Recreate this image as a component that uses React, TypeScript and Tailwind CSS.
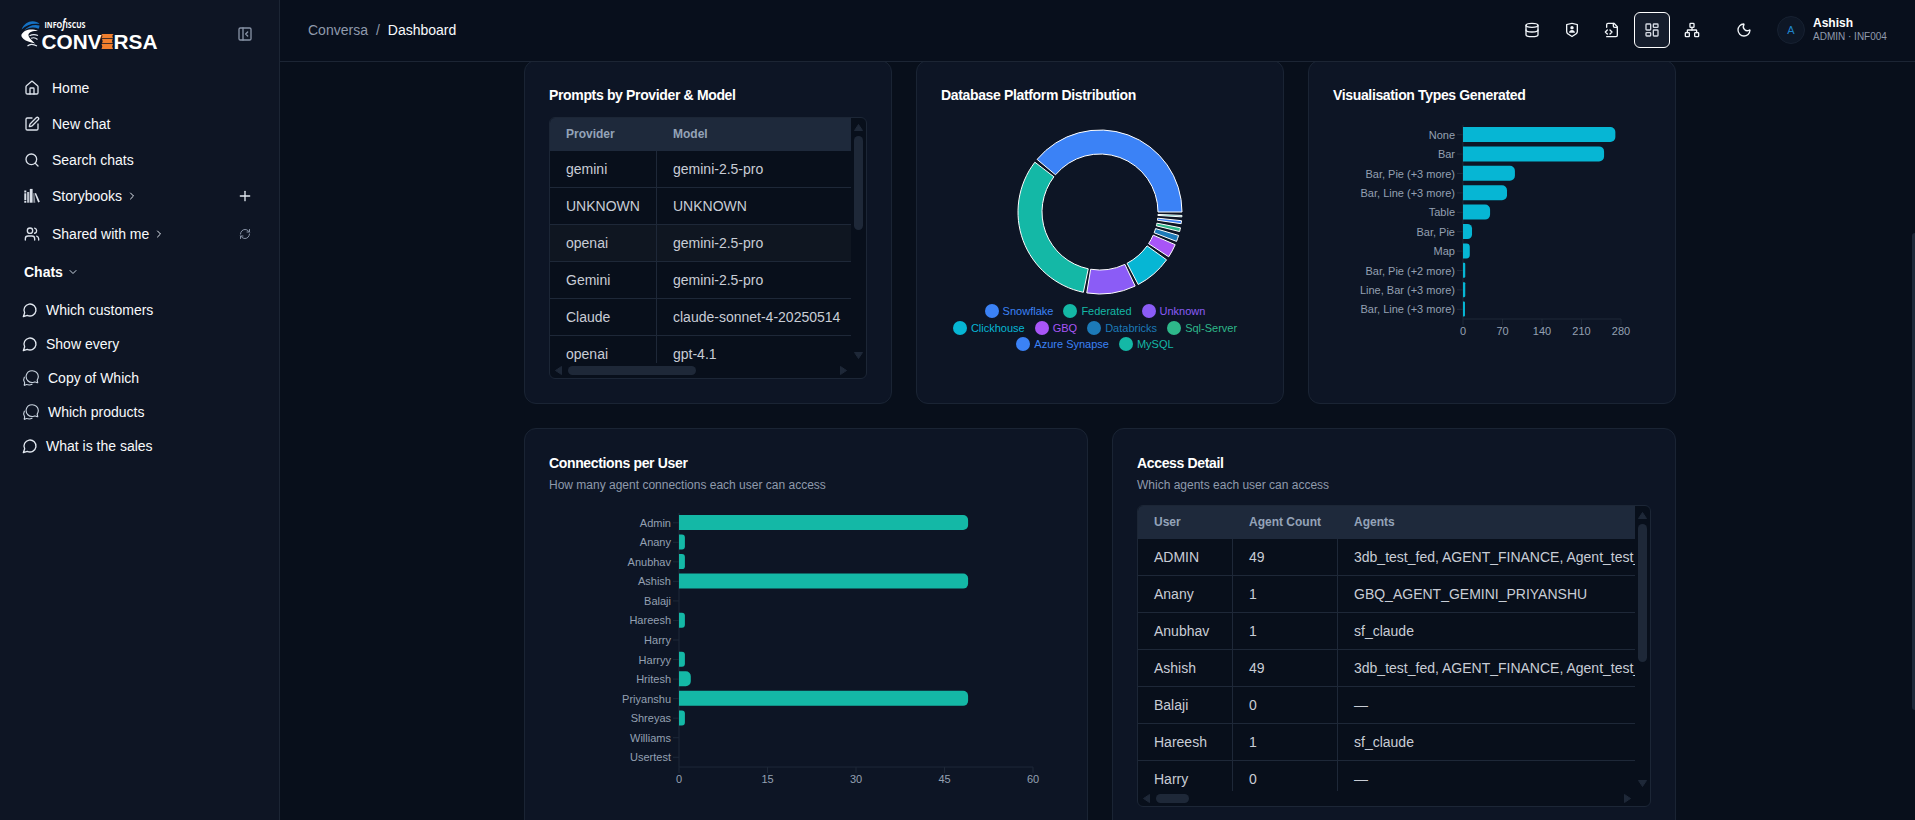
import type { ReactNode } from 'react';
import {
  ChevronDown,
  ChevronRight,
  Database,
  House,
  LayoutDashboard,
  Moon,
  Network,
  PanelLeftClose,
  Plus,
  RefreshCw,
  Search,
  SquarePen,
  Users,
} from 'lucide-react';
import { IoChatbubblesOutline } from 'react-icons/io5';
import { RiShieldUserLine } from 'react-icons/ri';

const chats = [
  { title: 'Which customers', shared: false },
  { title: 'Show every', shared: false },
  { title: 'Copy of Which', shared: true },
  { title: 'Which products', shared: true },
  { title: 'What is the sales', shared: false },
];

const providerRows = [
  ['gemini', 'gemini-2.5-pro'],
  ['UNKNOWN', 'UNKNOWN'],
  ['openai', 'gemini-2.5-pro'],
  ['Gemini', 'gemini-2.5-pro'],
  ['Claude', 'claude-sonnet-4-20250514'],
  ['openai', 'gpt-4.1'],
];

const accessRows = [
  ['ADMIN', '49', '3db_test_fed, AGENT_FINANCE, Agent_test_1'],
  ['Anany', '1', 'GBQ_AGENT_GEMINI_PRIYANSHU'],
  ['Anubhav', '1', 'sf_claude'],
  ['Ashish', '49', '3db_test_fed, AGENT_FINANCE, Agent_test_1'],
  ['Balaji', '0', '—'],
  ['Hareesh', '1', 'sf_claude'],
  ['Harry', '0', '—'],
];

// start and end are degrees, counter-clockwise from three o'clock
const platforms = [
  { name: 'Snowflake', color: '#3b82f6', start: 0, end: 140.1 },
  { name: 'Federated', color: '#14b8a6', start: 142.6, end: 258.3 },
  { name: 'Unknown', color: '#8b5cf6', start: 260.7, end: 295.4 },
  { name: 'Clickhouse', color: '#06b6d4', start: 297.8, end: 324.3 },
  { name: 'GBQ', color: '#a855f7', start: 326.9, end: 336.5 },
  { name: 'Databricks', color: '#1c7ab8', start: 339, end: 343.4 },
  { name: 'Sql-Server', color: '#2eb88a', start: 346.2, end: 348.9 },
  { name: 'Azure Synapse', color: '#3b82f6', start: 351.8, end: 353.9 },
  { name: 'MySQL', color: '#14b8a6', start: 356.6, end: 357.6 },
];

const legendRows = [platforms.slice(0, 3), platforms.slice(3, 7), platforms.slice(7)];

const visualisations = [
  { label: 'None', value: 270 },
  { label: 'Bar', value: 250 },
  { label: 'Bar, Pie (+3 more)', value: 92 },
  { label: 'Bar, Line (+3 more)', value: 78 },
  { label: 'Table', value: 48 },
  { label: 'Bar, Pie', value: 16 },
  { label: 'Map', value: 12 },
  { label: 'Bar, Pie (+2 more)', value: 4 },
  { label: 'Line, Bar (+3 more)', value: 4 },
  { label: 'Bar, Line (+3 more)', value: 3.5 },
];

const connections = [
  { label: 'Admin', value: 49 },
  { label: 'Anany', value: 1 },
  { label: 'Anubhav', value: 1 },
  { label: 'Ashish', value: 49 },
  { label: 'Balaji', value: 0 },
  { label: 'Hareesh', value: 1 },
  { label: 'Harry', value: 0 },
  { label: 'Harryy', value: 1 },
  { label: 'Hritesh', value: 2 },
  { label: 'Priyanshu', value: 49 },
  { label: 'Shreyas', value: 1 },
  { label: 'Williams', value: 0 },
  { label: 'Usertest', value: 0 },
];

function Logo() {
  return (
    <svg width="140" height="40" viewBox="0 -5 140 40" className="block">
      <path d="M1.500 10.500 C4 5 8 2.300 12.500 2.300 C15.500 2.300 18 3.200 19.500 5 C13 3.800 6.500 5.500 1.500 10.500Z" fill="#1672c4" />
      <path d="M4 11.500 C8 6.800 14 5 19.500 6.500 C19.500 8 19 9 18.500 9.800 C13.500 7.500 8.500 8.500 4 11.500Z" fill="#1672c4" />
      <path
        d="M1.500 15.500 C4 11 11 8.800 18 12 C12 11.500 8 13.500 8.500 16.500 C9 19.500 12.500 21.500 15 24.500 C10 22.800 6 22.500 3.500 20 C1.800 18.300 1 17 1.500 15.500Z"
        fill="#fff"
      />
      <path
        d="M9.500 16.800 C12 15.400 15 15.300 18 16.500 M11 19.300 C13.500 18.300 16 18.900 17.500 20.500 M7.500 27 C10 24.800 13.500 25 17 27"
        fill="none"
        stroke="#e2e8f0"
        strokeWidth="1.100"
      />
      <g fill="#fff" fontWeight="700">
        <text x="24.500" y="8.800" textLength="41" lengthAdjust="spacingAndGlyphs" fontFamily="'Open Sans', sans-serif" fontSize="9.500">
          INFO
          <tspan fontStyle="italic" fontSize="11.500">f</tspan>
          ISCUS
        </text>
        <g fontFamily="'Liberation Sans', Arial, sans-serif" fontSize="21">
          <text x="21.500" y="30" textLength="60" lengthAdjust="spacingAndGlyphs">CONV</text>
          <text x="93.500" y="30" textLength="44" lengthAdjust="spacingAndGlyphs">RSA</text>
        </g>
      </g>
      <path
        d="M81.500 15 H93.500 L92.300 16.800 L93 19.200 H81.500 L82.500 17Z M82 20 H92.700 L92 22 L92.700 24.300 H82 L82.700 22.200Z M81.500 25 H93 L92.200 27.500 L93 30 H81.500 L82.300 27.500Z"
        fill="#f07f2e"
      />
    </svg>
  );
}

function BooksIcon() {
  return (
    <svg width="16" height="16" viewBox="0 0 16 16" fill="currentColor">
      <path d="M0.300 2.500 H2.300 V4.500 H0.300Z M0.300 5.200 H2.300 V12 H0.300Z M0.300 12.700 H2.300 V14.700 H0.300Z" />
      <path d="M3.100 4 H5.300 V14.700 H3.100Z" opacity="0.850" />
      <path d="M5.800 0.900 H8.600 V14.700 H5.800Z" />
      <path d="M9.300 5.300 L10.300 4.900 L11.300 14.700 H9.300Z" opacity="0.600" />
      <path d="M10.600 5.600 L12 5 L15.800 13.800 L14.200 14.600Z" />
    </svg>
  );
}

function ChatIcon() {
  return (
    <svg width="16" height="16" viewBox="0 0 24 24" fill="none" stroke="#e2e8f0" strokeWidth="2" strokeLinecap="round" strokeLinejoin="round">
      <path d="M7.900 20A9 9 0 1 0 4 16.100L2 22Z" />
    </svg>
  );
}

function FileCodeIcon() {
  return (
    <svg width="16" height="16" viewBox="0 0 24 24" fill="none" stroke="currentColor" strokeWidth="2" strokeLinecap="round" strokeLinejoin="round">
      <path d="M4 22h14a2 2 0 0 0 2-2V7l-5-5H6a2 2 0 0 0-2 2v4" />
      <path d="M14 2v4a2 2 0 0 0 2 2h4" />
      <path d="m5 12-3 3 3 3" />
      <path d="m9 18 3-3-3-3" />
    </svg>
  );
}

function NavItem({ icon, label, chevron, action }: { icon: ReactNode; label: string; chevron?: boolean; action?: ReactNode }) {
  return (
    <div className="flex h-9 items-center pl-6 pr-[26px] text-sm text-[#f8fafc]">
      <span className="flex w-4 justify-center text-[#dbe1ea]">{icon}</span>
      <span className="ml-3">{label}</span>
      {chevron && <ChevronRight className="ml-1 h-3 w-3 text-[#e2e8f0]" />}
      {action && <span className="ml-auto flex w-4 justify-center">{action}</span>}
    </div>
  );
}

function Sidebar() {
  return (
    <aside className="flex h-full w-[280px] shrink-0 flex-col border-r border-[#1c2534] bg-[#0e1524]">
      <div className="flex h-[70px] shrink-0 items-start justify-between pl-5 pr-[26px] pt-[14px]">
        <Logo />
        <PanelLeftClose className="mt-3 h-4 w-4 text-[#8792a5]" />
      </div>
      <nav className="flex flex-col">
        <NavItem icon={<House className="h-4 w-4" />} label="Home" />
        <NavItem icon={<SquarePen className="h-4 w-4" />} label="New chat" />
        <NavItem icon={<Search className="h-4 w-4" />} label="Search chats" />
        <NavItem icon={<BooksIcon />} label="Storybooks" chevron action={<Plus className="h-4 w-4 text-[#e2e8f0]" />} />
        <div className="h-0.5" />
        <NavItem
          icon={<Users className="h-4 w-4" />}
          label="Shared with me"
          chevron
          action={<RefreshCw className="h-3 w-3 text-[#8792a5]" />}
        />
      </nav>
      <div className="mt-1.5 flex h-7 items-center gap-1 pl-6 text-sm font-bold text-white">
        Chats
        <ChevronDown className="h-3 w-3 text-[#cbd5e1]" />
      </div>
      <div className="mt-[7px] flex flex-col">
        {chats.map((chat) => (
          <div key={chat.title} className="flex h-[34px] items-center gap-2 pl-[22px] text-sm text-[#f8fafc]">
            {chat.shared ? <IoChatbubblesOutline className="h-[18px] w-[18px] text-[#cbd5e1]" /> : <ChatIcon />}
            {chat.title}
          </div>
        ))}
      </div>
    </aside>
  );
}

function IconButton({ children, active }: { children: ReactNode; active?: boolean }) {
  return (
    <div
      className={
        active
          ? 'flex h-9 w-9 items-center justify-center rounded-md border border-white bg-[#151d2c] text-[#d5dae3]'
          : 'flex h-9 w-9 items-center justify-center text-[#f1f5f9]'
      }
    >
      {children}
    </div>
  );
}

function Header() {
  return (
    <header className="relative z-10 flex h-[62px] shrink-0 items-center border-b border-[#1c2534] bg-[#080f1c] pl-7 pb-px">
      <div className="flex items-center gap-2 text-sm text-[#8f9aac]">
        <span>Conversa</span>
        <span>/</span>
        <span className="text-[#f8fafc]">Dashboard</span>
      </div>
      <div className="ml-auto flex items-center">
        <div className="flex gap-1">
          <IconButton>
            <Database className="h-4 w-4" />
          </IconButton>
          <IconButton>
            <RiShieldUserLine className="h-4 w-4" />
          </IconButton>
          <IconButton>
            <FileCodeIcon />
          </IconButton>
          <IconButton active>
            <LayoutDashboard className="h-4 w-4" />
          </IconButton>
          <IconButton>
            <Network className="h-4 w-4" />
          </IconButton>
        </div>
        <div className="ml-4">
          <IconButton>
            <Moon className="h-4 w-4" />
          </IconButton>
        </div>
        <div className="ml-[15px] flex h-7 w-7 items-center justify-center rounded-full border border-[#172131] bg-[#0e1726] text-[11px] text-[#1f83c9]">
          A
        </div>
        <div className="ml-2 w-[102px] pb-0.5">
          <div className="text-xs font-bold leading-[14px] text-white">Ashish</div>
          <div className="text-[10px] leading-[13px] text-[#8f9aac]">ADMIN · INF004</div>
        </div>
      </div>
    </header>
  );
}

function Card({ title, subtitle, className, children }: { title: string; subtitle?: string; className: string; children: ReactNode }) {
  return (
    <section className={`flex flex-col rounded-xl border border-[#1a2434] bg-[#0d1525] p-6 ${className}`}>
      <h3 className="text-sm font-bold tracking-tight text-white">{title}</h3>
      {subtitle && <p className="mt-1 text-xs text-[#8f9aac]">{subtitle}</p>}
      <div className="mt-3">{children}</div>
    </section>
  );
}

function Arrow({ rotate }: { rotate: number }) {
  return (
    <svg width="9" height="7" viewBox="0 0 9 7" style={{ transform: `rotate(${rotate}deg)` }}>
      <path d="M4.500 0.500 L8.500 6.500 H0.500 Z" fill="#1e2838" stroke="#1e2838" strokeLinejoin="round" />
    </svg>
  );
}

interface ScrollTableProps {
  columns: { title: string; className: string }[];
  rows: string[][];
  height: number;
  thumbY: number;
  thumbX: number;
  highlighted?: number;
}

function ScrollTable({ columns, rows, height, thumbY, thumbX, highlighted }: ScrollTableProps) {
  return (
    <div className="overflow-hidden rounded-md border border-[#1c2636] bg-[#080f1b]" style={{ height }}>
      <div className="flex" style={{ height: height - 17 }}>
        <div className="min-w-0 flex-1 overflow-hidden">
          <div className="flex h-[33px] items-center bg-[#1e293b] pb-0.5 text-xs font-bold text-[#94a3b8]">
            {columns.map((column) => (
              <div key={column.title} className={`shrink-0 whitespace-nowrap px-4 ${column.className}`}>
                {column.title}
              </div>
            ))}
          </div>
          {rows.map((row, i) => (
            <div
              key={i}
              className={`flex h-[37px] border-b border-[#1e2838] text-sm text-[#c8cdd6] ${i === highlighted ? 'bg-[#0f1621]' : ''}`}
            >
              {row.map((cell, j) => (
                <div
                  key={j}
                  className={`flex shrink-0 items-center whitespace-nowrap px-4 ${columns[j].className} ${
                    j < row.length - 1 ? 'border-r border-[#1e2838]' : ''
                  }`}
                >
                  {cell}
                </div>
              ))}
            </div>
          ))}
        </div>
        <div className="flex w-[15px] shrink-0 flex-col items-center justify-between pb-1 pt-[6px]">
          <div className="flex flex-col items-center gap-[5px]">
            <Arrow rotate={0} />
            <div className="w-[9px] rounded-full bg-[#1e2838]" style={{ height: thumbY }} />
          </div>
          <Arrow rotate={180} />
        </div>
      </div>
      <div className="flex h-[15px] items-center justify-between pl-1 pr-[18px]">
        <div className="flex items-center gap-[5px]">
          <Arrow rotate={-90} />
          <div className="h-[9px] rounded-full bg-[#1e2838]" style={{ width: thumbX }} />
        </div>
        <Arrow rotate={90} />
      </div>
    </div>
  );
}

function slicePath(start: number, end: number) {
  const point = (r: number, deg: number) => {
    const rad = (-deg * Math.PI) / 180;
    return `${(r * Math.cos(rad)).toFixed(2)} ${(r * Math.sin(rad)).toFixed(2)}`;
  };
  const large = end - start > 180 ? 1 : 0;
  return `M${point(82, start)} A82 82 0 ${large} 0 ${point(82, end)} L${point(58, end)} A58 58 0 ${large} 1 ${point(58, start)} Z`;
}

function PlatformDonut() {
  return (
    <div>
      <svg width="318" height="186" viewBox="-159 -95 318 186" className="block">
        {platforms.map((slice) => (
          <path key={slice.name} d={slicePath(slice.start, slice.end)} fill={slice.color} stroke="#fff" />
        ))}
      </svg>
      {legendRows.map((row, i) => (
        <div key={i} className="flex h-[16.5px] items-center justify-center text-[11px]">
          {row.map((item) => (
            <span key={item.name} className="mr-[10px] flex items-center" style={{ color: item.color }}>
              <svg width="14" height="14" className="mr-1">
                <circle cx="7" cy="7" r="7" fill={item.color} />
              </svg>
              {item.name}
            </span>
          ))}
        </div>
      ))}
    </div>
  );
}

interface BarChartProps {
  data: { label: string; value: number }[];
  ticks: number[];
  color: string;
  width: number;
  height: number;
  left: number;
  top: number;
  plotWidth: number;
  step: number;
}

function BarChart({ data, ticks, color, width, height, left, top, plotWidth, step }: BarChartProps) {
  const bottom = top + data.length * step;
  const max = ticks[ticks.length - 1];

  return (
    <svg width={width} height={height} className="block" fontFamily="'Liberation Sans', Arial, sans-serif" fontSize="11" fill="#94a0b2">
      <path d={`M${left} ${top} V${bottom} H${left + plotWidth}`} fill="none" stroke="#1e2838" />
      {ticks.map((tick) => {
        const x = left + (tick / max) * plotWidth;
        return (
          <g key={tick}>
            <path d={`M${x} ${bottom} v6`} stroke="#1e2838" />
            <text x={x} y={bottom + 16} textAnchor="middle">
              {tick}
            </text>
          </g>
        );
      })}
      {data.map((item, i) => {
        const y = top + i * step;
        const w = (item.value / max) * plotWidth;
        const r = Math.min(5, w / 2);
        return (
          <g key={i}>
            <path d={`M${left - 6} ${y + step / 2} h6`} stroke="#1e2838" />
            <text x={left - 8} y={y + step / 2 + 4} textAnchor="end">
              {item.label}
            </text>
            {w > 0 && (
              <path
                d={`M${left} ${y + 2} h${w - r} a${r} ${r} 0 0 1 ${r} ${r} v${15 - 2 * r} a${r} ${r} 0 0 1 ${-r} ${r} h${r - w} Z`}
                fill={color}
              />
            )}
          </g>
        );
      })}
    </svg>
  );
}

export default function App() {
  return (
    <div className="flex h-[820px] w-full overflow-hidden bg-[#080f1b] font-['Liberation_Sans',Arial,sans-serif]">
      <Sidebar />
      <div className="flex min-w-0 flex-1 flex-col">
        <Header />
        <main className="flex min-h-0 flex-1 justify-between overflow-hidden">
          <div className="-mt-0.5 ml-[244px] flex w-[1152px] flex-col gap-6">
            <div className="flex gap-6">
              <Card title="Prompts by Provider & Model" className="h-[344px] w-[368px]">
                <ScrollTable
                  columns={[
                    { title: 'Provider', className: 'w-[107px]' },
                    { title: 'Model', className: 'w-[300px]' },
                  ]}
                  rows={providerRows}
                  height={262}
                  thumbY={94}
                  thumbX={128}
                  highlighted={2}
                />
              </Card>
              <Card title="Database Platform Distribution" className="h-[344px] w-[368px]">
                <PlatformDonut />
              </Card>
              <Card title="Visualisation Types Generated" className="h-[344px] w-[368px]">
                <BarChart
                  data={visualisations}
                  ticks={[0, 70, 140, 210, 280]}
                  color="#06b6d4"
                  width={318}
                  height={240}
                  left={130}
                  top={8}
                  plotWidth={158}
                  step={19.4}
                />
              </Card>
            </div>
            <div className="flex gap-6">
              <Card
                title="Connections per User"
                subtitle="How many agent connections each user can access"
                className="h-[404px] w-[564px]"
              >
                <BarChart
                  data={connections}
                  ticks={[0, 15, 30, 45, 60]}
                  color="#14b8a6"
                  width={514}
                  height={300}
                  left={130}
                  top={8}
                  plotWidth={354}
                  step={19.54}
                />
              </Card>
              <Card title="Access Detail" subtitle="Which agents each user can access" className="h-[404px] w-[564px]">
                <ScrollTable
                  columns={[
                    { title: 'User', className: 'w-[95px]' },
                    { title: 'Agent Count', className: 'w-[105px]' },
                    { title: 'Agents', className: 'w-[420px]' },
                  ]}
                  rows={accessRows}
                  height={302}
                  thumbY={138}
                  thumbX={33}
                />
              </Card>
            </div>
          </div>
          <div className="mt-[171px] h-[477px] w-[3px] rounded-l-full bg-[#1e2838]" />
        </main>
      </div>
    </div>
  );
}
